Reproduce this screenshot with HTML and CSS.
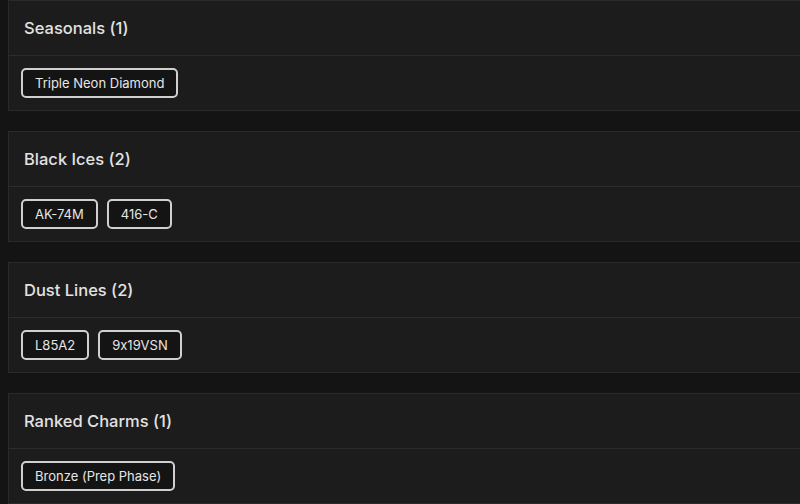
FILE: index.html
```html
<html>
  <head>
    <title>Collection</title>
    <link rel="stylesheet" href="styles.css">
  </head>
  <body>
    <div class="list">
      <!-- Seasonals -->
      <section class="group">
        <h2 class="group-title">Seasonals (1)</h2>
        <div class="group-items">
          <span class="chip">Triple Neon Diamond</span>
        </div>
      </section>
      <!-- Black Ices -->
      <section class="group">
        <h2 class="group-title">Black Ices (2)</h2>
        <div class="group-items">
          <span class="chip">AK-74M</span>
          <span class="chip">416-C</span>
        </div>
      </section>
      <!-- Dust Lines -->
      <section class="group">
        <h2 class="group-title">Dust Lines (2)</h2>
        <div class="group-items">
          <span class="chip">L85A2</span>
          <span class="chip">9x19VSN</span>
        </div>
      </section>
      <!-- Ranked Charms -->
      <section class="group">
        <h2 class="group-title">Ranked Charms (1)</h2>
        <div class="group-items">
          <span class="chip">Bronze (Prep Phase)</span>
        </div>
      </section>
    </div>
  </body>
</html>
```

FILE: styles.css
```css
/* Page */
html {
  overflow: hidden;
}
body {
  margin: 0;
  padding: 0 0 0 8px;
  background-color: #141414;
  font-family: "Inter", "DejaVu Sans", sans-serif;
  font-feature-settings: "calt" 0;
  color: #e2e2e2;
}

/* Column of groups */
.list {
  display: flex;
  flex-direction: column;
  gap: 20px;
  margin-right: -10px;
}

/* One group card */
.group {
  background-color: #1c1c1c;
  border: 1px solid #2a2a2a;
}
.group-title {
  margin: 0;
  height: 54px;
  padding: 0 15px;
  display: flex;
  align-items: center;
  font-size: 16.5px;
  font-weight: 500;
  border-bottom: 1px solid #2c2c2c;
}
.group-items {
  display: flex;
  gap: 9px;
  padding: 12px 12px;
}

/* Item chip */
.chip {
  display: inline-flex;
  align-items: center;
  height: 30px;
  box-sizing: border-box;
  padding: 0 12px;
  border: 2px solid #d0d0d0;
  border-radius: 5px;
  background-color: #141414;
  font-size: 13px;
  color: #e6e6e6;
}
```
